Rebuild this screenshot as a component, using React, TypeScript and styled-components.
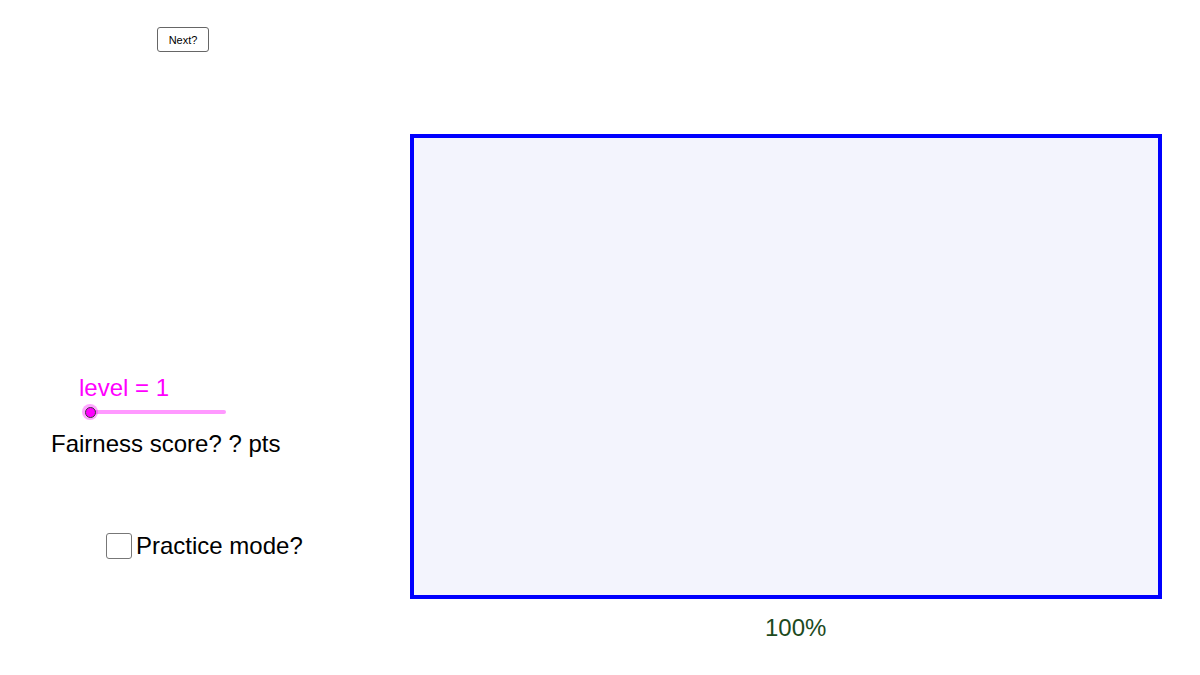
import React from 'react'
import styled, { createGlobalStyle } from 'styled-components'

const GlobalStyle = createGlobalStyle`
  html, body {
    margin: 0;
    padding: 0;
    background: #ffffff;
  }
  body {
    font-family: "Liberation Sans", Arial, sans-serif;
  }
`

const Canvas = styled.div`
  display: grid;
  grid-template-columns: 410px 752px;
  grid-template-rows: 134px 465px auto;
  width: 1200px;
  height: 675px;
  overflow: hidden;
  background: #ffffff;
`

const Header = styled.div`
  grid-column: 1 / 3;
  grid-row: 1;
  padding: 27px 0 0 157px;
`

const NextButton = styled.button`
  display: block;
  width: 52px;
  height: 25px;
  padding: 0;
  border: 1px solid #666666;
  border-radius: 3px;
  background: #ffffff;
  font-family: "Liberation Sans", Arial, sans-serif;
  font-size: 11px;
  color: #000000;
  cursor: pointer;
`

const Controls = styled.div`
  grid-column: 1;
  grid-row: 2 / 4;
  display: flex;
  flex-direction: column;
  align-items: flex-start;
  padding-top: 240px;
`

const Item = styled.div<{ $indent: number; $gap?: number }>`
  margin-left: ${(p) => p.$indent}px;
  margin-top: ${(p) => p.$gap || 0}px;
`

const Label = styled.span<{ $color?: string }>`
  display: block;
  font-size: 24px;
  line-height: 28px;
  color: ${(p) => p.$color || '#000000'};
  white-space: nowrap;
`

const Slider = styled.div`
  position: relative;
  width: 150px;
  height: 20px;
`

const Track = styled.div`
  position: absolute;
  left: 10px;
  top: 8px;
  width: 136px;
  height: 4px;
  border-radius: 2px;
  background: #ff99ff;
`

const Knob = styled.div`
  position: absolute;
  left: 2px;
  top: 2px;
  width: 16px;
  height: 16px;
  border-radius: 50%;
  background: rgba(255, 0, 255, 0.35);
  display: flex;
  align-items: center;
  justify-content: center;

  &::after {
    content: '';
    width: 9px;
    height: 9px;
    border-radius: 50%;
    background: #ff00ff;
    border: 1px solid #3a3a3a;
  }
`

const CheckRow = styled.label`
  display: flex;
  align-items: center;
  gap: 4px;
  cursor: pointer;
`

const Box = styled.span`
  display: block;
  width: 24px;
  height: 24px;
  border: 1px solid #777777;
  border-radius: 3px;
  background: #ffffff;
`

const Board = styled.div`
  grid-column: 2;
  grid-row: 2;
  box-sizing: border-box;
  border: 4px solid #0000ff;
  background: #f3f4fd;
`

const Caption = styled.div`
  grid-column: 2;
  grid-row: 3;
  padding: 15px 0 0 355px;
`

const App: React.FC = () => {
  return (
    <>
      <GlobalStyle />
      <Canvas>
        <Header>
          <NextButton>Next?</NextButton>
        </Header>

        <Controls>
          <Item $indent={79}>
            <Label $color="#ff00ff">level = 1</Label>
          </Item>
          <Item $indent={80}>
            <Slider>
              <Track />
              <Knob />
            </Slider>
          </Item>
          <Item $indent={51} $gap={8}>
            <Label>Fairness score? ? pts</Label>
          </Item>
          <Item $indent={106} $gap={74}>
            <CheckRow>
              <Box />
              <Label>Practice mode?</Label>
            </CheckRow>
          </Item>
        </Controls>

        <Board />

        <Caption>
          <Label $color="#1d4a1d">100%</Label>
        </Caption>
      </Canvas>
    </>
  )
}

export default App
